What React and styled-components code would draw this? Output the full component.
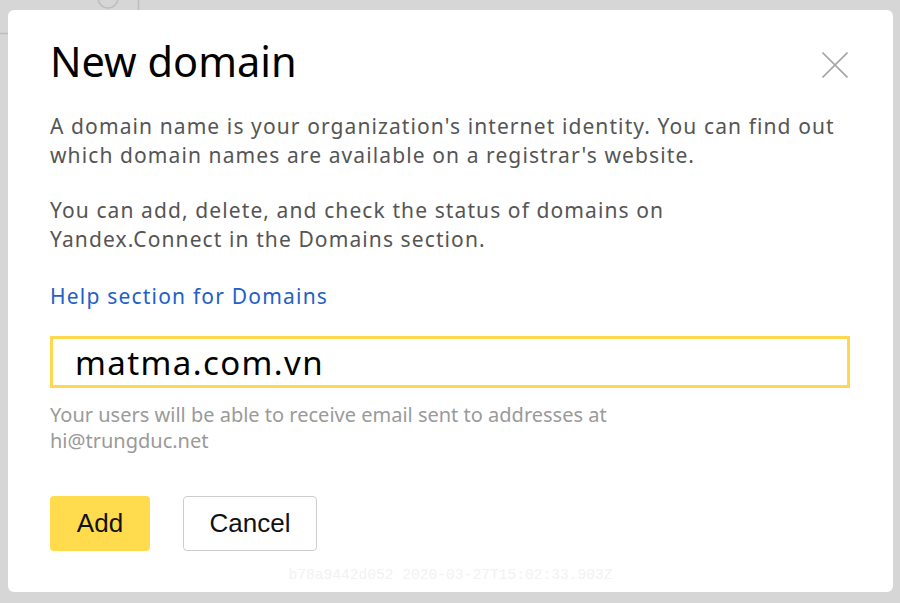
import React from 'react';
import styled, { createGlobalStyle } from 'styled-components';

const GlobalStyle = createGlobalStyle`
  html, body {
    margin: 0;
    padding: 0;
    background: #d6d6d6;
  }
  * {
    box-sizing: border-box;
  }
`;

const App = () => {
  return (
    <Page>
      <GlobalStyle />
      {/* bits of the page that sit under the overlay */}
      <Backdrop width="160" height="40" viewBox="0 0 160 40">
        <circle cx="108" cy="-2" r="10" fill="none" stroke="#bdbdbd" strokeWidth="1.5" />
        <line x1="138.5" y1="0" x2="138.5" y2="10" stroke="#bdbdbd" strokeWidth="1.5" />
        <line x1="0" y1="33.5" x2="8" y2="33.5" stroke="#bdbdbd" strokeWidth="1.5" />
      </Backdrop>

      <Dialog>
        <Header>
          <Title>New domain</Title>
          <CloseButton type="button" aria-label="Close">
            <svg width="26" height="26" viewBox="0 0 26 26">
              <path d="M0.5 0.5 L25.5 25.5 M25.5 0.5 L0.5 25.5" stroke="#a6a6a6" strokeWidth="1.6" fill="none" />
            </svg>
          </CloseButton>
        </Header>

        <Text>
          A domain name is your organization's internet identity. You can find out which domain
          names are available on a registrar's website.
        </Text>
        <Text>
          You can add, delete, and check the status of domains on Yandex.Connect in the Domains
          section.
        </Text>
        <HelpLink href="#">Help section for Domains</HelpLink>

        <DomainInput type="text" value="matma.com.vn" readOnly />
        <Hint>
          Your users will be able to receive email sent to addresses at
          <br />
          hi@trungduc.net
        </Hint>

        <Actions>
          <Button $primary type="button">Add</Button>
          <Button type="button">Cancel</Button>
        </Actions>

        <BuildStamp>b78a9442d052 2020-03-27T15:02:33.903Z</BuildStamp>
      </Dialog>
    </Page>
  );
};

export default App;

const Page = styled.div`
  position: relative;
  width: 900px;
  height: 603px;
  padding: 10px 7px 11px 8px;
  background: #d6d6d6;
  overflow: hidden;
`;

const Backdrop = styled.svg`
  position: absolute;
  left: 0;
  top: 0;
`;

const Dialog = styled.div`
  position: relative;
  height: 100%;
  display: flex;
  flex-direction: column;
  background: #fff;
  border-radius: 6px;
  padding: 27px 42px 0 42px;
  font-family: 'Noto Sans', 'Open Sans', sans-serif;
`;

const Header = styled.div`
  display: flex;
  justify-content: space-between;
  align-items: flex-start;
`;

const Title = styled.h1`
  margin: 0;
  font-size: 41.5px;
  line-height: 48px;
  font-weight: 400;
  color: #000;
`;

const CloseButton = styled.button`
  width: 32px;
  height: 32px;
  margin-top: 12px;
  padding: 0;
  border: none;
  background: none;
  display: flex;
  align-items: center;
  justify-content: center;
  cursor: pointer;
`;

const Text = styled.p`
  max-width: 790px;
  margin: 27px 0 0 0;
  font-size: 21px;
  line-height: 28.5px;
  letter-spacing: 1.1px;
  color: #555;
`;

const HelpLink = styled.a`
  align-self: flex-start;
  margin-top: 29px;
  font-size: 21px;
  line-height: 29px;
  letter-spacing: 1.2px;
  color: #2260c9;
  text-decoration: none;
`;

const DomainInput = styled.input`
  display: block;
  width: 800px;
  height: 52px;
  margin-top: 25px;
  padding: 0 0 0 22px;
  border: 3px solid #ffd84f;
  outline: none;
  font-family: 'Noto Sans', 'Open Sans', sans-serif;
  font-size: 33px;
  letter-spacing: 1.4px;
  color: #000;
  background: #fff;
`;

const Hint = styled.div`
  margin-top: 14px;
  font-size: 20px;
  line-height: 26px;
  color: #9a9a9a;
`;

const Actions = styled.div`
  display: flex;
  gap: 33px;
  margin-top: 42px;
`;

const Button = styled.button`
  height: 55px;
  min-width: ${(p) => (p.$primary ? '100px' : '134px')};
  padding: 0 24px;
  border-radius: 4px;
  border: ${(p) => (p.$primary ? 'none' : '1.5px solid #cdcdcd')};
  background: ${(p) => (p.$primary ? '#ffdb4d' : '#fff')};
  color: #111;
  font-family: 'Liberation Sans', Arial, sans-serif;
  font-size: 26px;
  display: flex;
  align-items: center;
  justify-content: center;
  cursor: pointer;
`;

const BuildStamp = styled.div`
  margin-top: 14px;
  text-align: center;
  font-family: 'Liberation Mono', monospace;
  font-size: 14.6px;
  line-height: 20px;
  color: #f2f2f2;
`;
